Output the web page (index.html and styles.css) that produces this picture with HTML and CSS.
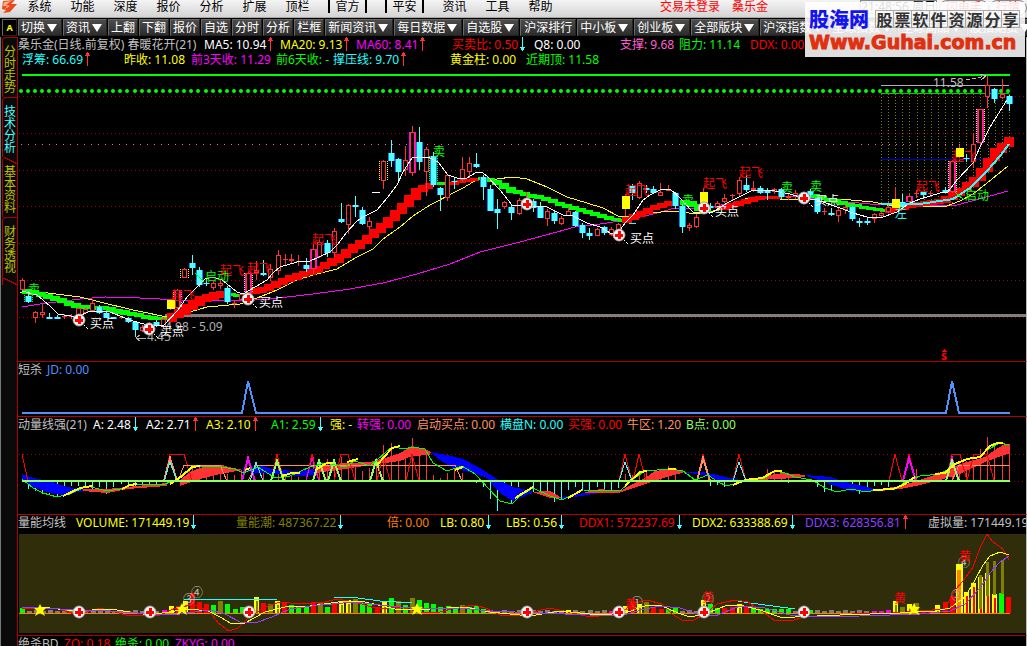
FILE: index.html
```html
<!DOCTYPE html>
<html lang="zh-CN">
<head>
  <meta charset="UTF-8">
  <meta name="viewport" content="width=device-width, initial-scale=1.0">
  <title>桑乐金 - 技术分析</title>
  <link rel="stylesheet" href="styles.css">
</head>
<body>
  <!-- 主菜单 -->
  <header class="menubar">
    <svg class="logo" viewBox="0 0 18 14" aria-hidden="true">
      <path d="M3 1 L15 0 L11 4 L17 4 L10 12 L3 13 L6 10 L2 9 Z" fill="#e8481c"/>
      <path d="M4 2 L11 1 L6 5 L10 6 L5 9 L7 6 L3 6 Z" fill="#ffb088"/>
    </svg>
    <nav class="menu">
      <a href="#">系统</a>
      <a href="#">功能</a>
      <a href="#">深度</a>
      <a href="#">报价</a>
      <a href="#">分析</a>
      <a href="#">扩展</a>
      <a href="#">顶栏</a>
      <a href="#" class="framed"><span>官方</span></a>
      <a href="#" class="framed"><span>平安</span></a>
      <a href="#">资讯</a>
      <a href="#">工具</a>
      <a href="#">帮助</a>
    </nav>
    <div class="account"><span>交易未登录</span><span>桑乐金</span></div>
    <div class="clock">21:48:56 周日</div>
    <button class="round">闪电手</button>
    <button class="round">行情</button>
  </header>

  <!-- 工具栏 -->
  <div class="toolbar">
    <button class="mark">A</button>
    <button class="drop">切换</button>
    <button class="drop">资讯</button>
    <button>上翻</button>
    <button>下翻</button>
    <button>报价</button>
    <button>自选</button>
    <button>分时</button>
    <button>分析</button>
    <button>栏框</button>
    <button class="drop">新闻资讯</button>
    <button class="drop">每日数据</button>
    <button class="drop">自选股</button>
    <button class="wide">沪深排行</button>
    <button class="drop">中小板</button>
    <button class="drop">创业板</button>
    <button class="drop">全部版块</button>
    <button class="drop">沪深指数</button>
    <button class="drop">全球指数</button>
    <button class="drop">全球商品</button>
    <button class="drop">股指期货</button>
  </div>

  <div class="workspace">
    <nav class="side">
      <a href="#">分时走势</a>
      <a href="#" class="active">技术分析</a>
      <a href="#">基本资料</a>
      <a href="#" class="last">财务透视</a>
    </nav>

    <main class="panels">
      <!-- K线 -->
      <section class="panel">
        <div class="info price-a">
          <span class="grey">桑乐金(日线.前复权) 春暖花开(21)</span>
          <span class="white up">MA5: 10.94</span>
          <span class="yellow up">MA20: 9.13</span>
          <span class="magenta up">MA60: 8.41</span>
          <span class="red down">买卖比: 0.50</span>
          <span class="white">Q8: 0.00</span>
          <span class="pink">支撑: 9.68</span>
          <span class="green">阻力: 11.14</span>
          <span class="red">DDX: 0.00</span>
        </div>
        <div class="info price-b">
          <span class="cyan up">浮筹: 66.69</span>
          <span class="yellow">昨收: 11.08</span>
          <span class="magenta">前3天收: 11.29</span>
          <span class="green">前6天收: -</span>
          <span class="cyan up">撑压线: 9.70</span>
          <span class="yellow">黄金柱: 0.00</span>
          <span class="green">近期顶: 11.58</span>
        </div>
        <svg class="chart" id="price" viewBox="18 67 1008 294"></svg>
      </section>

      <section class="panel">
        <div class="info kill">
          <span class="grey">短杀</span>
          <span class="blue">JD: 0.00</span>
        </div>
        <svg class="chart" id="kill" viewBox="18 378 1008 38"></svg>
      </section>

      <!-- 动量 -->
      <section class="panel">
        <div class="info momentum">
          <span class="grey">动量线强(21)</span>
          <span class="white down">A: 2.48</span>
          <span class="white up">A2: 2.71</span>
          <span class="yellow up">A3: 2.10</span>
          <span class="green down">A1: 2.59</span>
          <span class="yellow">强: -</span>
          <span class="magenta">转强: 0.00</span>
          <span class="orange">启动买点: 0.00</span>
          <span class="cyan">横盘N: 0.00</span>
          <span class="red">买强: 0.00</span>
          <span class="orange">牛区: 1.20</span>
          <span class="lime">B点: 0.00</span>
        </div>
        <svg class="chart" id="momentum" viewBox="18 433 1008 81"></svg>
      </section>

      <!-- 成交量 -->
      <section class="panel">
        <div class="info volume">
          <span class="grey">量能均线</span>
          <span class="yellow down">VOLUME: 171449.19</span>
          <span class="olive down">量能潮: 487367.22</span>
          <span class="amber">倍: 0.00</span>
          <span class="yellow down">LB: 0.80</span>
          <span class="yellow down">LB5: 0.56</span>
          <span class="red down">DDX1: 572237.69</span>
          <span class="yellow down">DDX2: 633388.69</span>
          <span class="violet up">DDX3: 628356.81</span>
          <span class="grey">虚拟量: 171449.19</span>
        </div>
        <svg class="chart" id="volume" viewBox="18 531 1008 104"></svg>
      </section>

      <section class="panel">
        <div class="info bottom">
          <span class="grey">绝杀BD</span>
          <span class="red">ZQ: 0.18</span>
          <span class="green">绝杀: 0.00</span>
          <span class="magenta">ZKYG: 0.00</span>
        </div>
      </section>
    </main>
  </div>

  <aside class="watermark">
    <div class="watermark-top">
      <strong>股海网</strong>
      <span class="cells"><i>股</i><i>票</i><i>软</i><i>件</i><i>资</i><i>源</i><i>分</i><i>享</i></span>
    </div>
    <div class="watermark-url">Www.Guhai.com.cn</div>
  </aside>

  <script src="charts.js"></script>
</body>
</html>
```
FILE: styles.css
```css
* {
  box-sizing: border-box;
}
body {
  margin: 0;
  height: 100vh;
  overflow: hidden;
  background: #000;
  color: #c0c0c0;
  font-family: "Noto Sans", "Noto Sans CJK SC", sans-serif;
  font-size: 12px;
  line-height: 14px;
}
a {
  color: inherit;
  text-decoration: none;
}
button {
  font: inherit;
  margin: 0;
  cursor: pointer;
}

/* 菜单 */
.menubar {
  display: flex;
  align-items: flex-start;
  height: 18px;
  background: linear-gradient(#f4f4f4, #d4d4d4);
  border-bottom: 1px solid #a8a8a8;
  color: #000;
  white-space: nowrap;
}
.logo {
  flex: none;
  width: 18px;
  height: 14px;
}
.menu {
  display: flex;
}
.menu a {
  width: 43px;
  text-align: center;
}
.menu .framed {
  width: 57px;
}
.framed span {
  display: inline-block;
  line-height: 13px;
  padding: 0 5px;
  border-left: 2px solid #000;
  border-right: 2px solid #000;
}
.account {
  display: flex;
  gap: 12px;
  margin-left: 98px;
  width: 205px;
  color: #f00;
}
.clock {
  width: 78px;
  height: 14px;
  margin-right: 2px;
  border: 1px solid #888;
  line-height: 12px;
}
.round {
  height: 16px;
  padding: 0 6px;
  border: 1px solid #888;
  border-radius: 8px;
  background: #eee;
  color: #f00;
  line-height: 12px;
}

/* 工具栏 */
.toolbar {
  display: flex;
  gap: 1px;
  height: 19px;
  padding: 1px 2px;
  background: #000;
  overflow: hidden;
}
.toolbar button {
  flex: none;
  padding: 0 2px;
  border: 1px solid #6a6660;
  border-right-color: #222;
  border-bottom-color: #222;
  background: linear-gradient(#4c4c4c, #2c2c2c);
  color: #fff;
  line-height: 14px;
}
.toolbar .mark {
  width: 15px;
  background: #000;
  color: #ff0;
  font-weight: bold;
  font-size: 9px;
}
.toolbar .wide {
  padding: 0 3px;
}
.toolbar .drop::after {
  content: "";
  display: inline-block;
  margin: 0 2px;
  border: 5px solid transparent;
  border-top: 8px solid #fff;
  border-bottom: 0;
}

.workspace {
  display: flex;
}

/* 左侧标签 */
.side {
  flex: none;
  width: 18px;
  padding-left: 1px;
  background: #0a0a0a;
  border-left: 1px solid #777;
  border-right: 1px solid #b00000;
}
.side a {
  display: block;
  height: 60px;
  padding: 8px 1px 0;
  border-top: 1px solid #b00000;
  border-left: 1px solid #b00000;
  border-top-left-radius: 4px;
  color: #c0c000;
  line-height: 12px;
  word-break: break-all;
}
.side .active {
  color: #4ff;
}
.side .active + a {
  border-top: 0;
  padding-top: 9px;
  background: linear-gradient(to top right, transparent 46%, #b00000 46%, #b00000 56%, transparent 56%) 0 0 / 100% 7px no-repeat;
}
.side .last {
  height: 68px;
  background: linear-gradient(to top right, transparent 46%, #b00000 46%, #b00000 56%, transparent 56%) 0 100% / 100% 7px no-repeat;
}

/* 指标窗口 */
.panels {
  flex: 1;
  min-width: 0;
  overflow: hidden;
}
.panel {
  border-bottom: 1px solid #b00000;
  border-right: 1px solid #bbb;
}
.chart {
  display: block;
  width: 100%;
  shape-rendering: crispEdges;
}
.info {
  display: grid;
  height: 16px;
  line-height: 16px;
  white-space: nowrap;
}
.price-a {
  grid-template-columns: 186px 76px 76px 96px 82px 86px 59px 71px 1fr;
}
.price-b {
  grid-template-columns: 102px 67px 85px 57px 117px 76px 1fr;
  height: 14px;
  line-height: 14px;
  padding-left: 4px;
}
.kill {
  grid-template-columns: 29px 1fr;
}
.momentum {
  grid-template-columns: 75px 53px 60px 65px 59px 27px 60px 83px 68px 59px 59px 1fr;
}
.volume {
  grid-template-columns: 58px 160px 151px 53px 66px 73px 113px 113px 123px 1fr;
}
.bottom {
  grid-template-columns: 46px 51px 60px 1fr;
}
.up::after, .down::after {
  content: "";
  display: inline-block;
  width: 5px;
  height: 14px;
  margin: -3px 0 0 2px;
  vertical-align: middle;
}
.up::after {
  background:
    linear-gradient(#f33, #f33) 2px 0 / 1px 14px no-repeat,
    linear-gradient(#f33, #f33) 1px 1px / 3px 2px no-repeat,
    linear-gradient(#f33, #f33) 0 3px / 5px 1px no-repeat;
}
.down::after {
  background:
    linear-gradient(#4ff, #4ff) 2px 0 / 1px 14px no-repeat,
    linear-gradient(#4ff, #4ff) 1px 11px / 3px 2px no-repeat,
    linear-gradient(#4ff, #4ff) 0 10px / 5px 1px no-repeat;
}

.grey { color: #c0c0c0; }
.white { color: #fff; }
.yellow { color: #ff0; }
.magenta { color: #f0f; }
.red { color: #f00; }
.pink { color: #ff60d0; }
.green { color: #0f0; }
.cyan { color: #2ff; }
.blue { color: #5090ff; }
.orange { color: #ff9060; }
.lime { color: #90ff60; }
.olive { color: #808000; }
.amber { color: #ff8000; }
.violet { color: #9040ff; }

/* 右上角水印 */
.watermark {
  position: absolute;
  top: 2px;
  right: 2px;
  width: 220px;
  height: 55px;
  padding: 5px 4px 0;
  background: rgba(255, 255, 255, 0.87);
  white-space: nowrap;
}
.watermark-top {
  display: flex;
  justify-content: space-between;
  align-items: center;
  height: 24px;
}
.watermark strong {
  color: #1414f0;
  font-family: "Noto Sans CJK SC", sans-serif;
  font-size: 20px;
  font-weight: 900;
  line-height: 24px;
}
.cells {
  display: flex;
  margin-right: 1px;
  border-left: 1px solid #aaa;
}
.cells i {
  width: 18px;
  height: 18px;
  border: 1px solid #aaa;
  border-left: 0;
  color: #333;
  font-family: "Noto Sans CJK SC", sans-serif;
  font-size: 16px;
  font-style: normal;
  font-weight: bold;
  line-height: 16px;
  text-align: center;
}
.watermark-url {
  color: #e03010;
  font-family: "DejaVu Sans", sans-serif;
  font-size: 19px;
  font-weight: bold;
  line-height: 22px;
  -webkit-text-stroke: 1px #e03010;
}
```
FILE: charts.js
```js
const NS = 'http://www.w3.org/2000/svg';

function add(svg, name, attrs, text) {
  const el = document.createElementNS(NS, name);
  for (const key in attrs) el.setAttribute(key, attrs[key]);
  if (text) el.textContent = text;
  svg.appendChild(el);
  return el;
}

function line(svg, points, color, width = 1, dash = '') {
  add(svg, 'polyline', { points, fill: 'none', stroke: color, 'stroke-width': width, 'stroke-dasharray': dash });
}

function rect(svg, x, y, width, height, fill, stroke = 'none') {
  add(svg, 'rect', { x, y, width, height, fill, stroke });
}

function label(svg, x, y, text, color, size = 12) {
  add(svg, 'text', { x, y, fill: color, 'font-size': size }, text);
}

function parse(points) {
  return points.split(' ').map(p => p.split(',').map(Number));
}

function valueAt(pts, x) {
  for (let i = 1; i < pts.length; i++) {
    if (x <= pts[i][0]) {
      const [x0, y0] = pts[i - 1];
      const [x1, y1] = pts[i];
      return y0 + (y1 - y0) * (x - x0) / (x1 - x0);
    }
  }
  return pts[pts.length - 1][1];
}

// 阶梯状趋势带
function ribbon(svg, points, color, thick) {
  const pts = parse(points);
  const end = pts[pts.length - 1][0];
  for (let x = pts[0][0]; x < end; x += 7) {
    const a = valueAt(pts, x);
    const b = valueAt(pts, Math.min(x + 7, end));
    const top = Math.round(Math.min(a, b) - thick / 2);
    rect(svg, x, top, Math.min(10, end - x + 3), Math.round(Math.abs(a - b) + thick), color);
  }
}

// 买点图标
function plus(svg, x, y) {
  add(svg, 'circle', { cx: x, cy: y, r: 6, fill: '#fff', stroke: '#999', 'stroke-width': 1, 'shape-rendering': 'auto' });
  add(svg, 'circle', { cx: x, cy: y, r: 5, fill: 'none', stroke: '#ddd', 'stroke-width': 1, 'shape-rendering': 'auto' });
  rect(svg, x - 4, y - 1, 8, 3, '#f00');
  rect(svg, x - 1, y - 4, 3, 8, '#f00');
}

/* ---------- K线 ---------- */
const price = document.getElementById('price');

for (const y of [96, 133, 170, 206, 243, 280, 317]) line(price, `19,${y}.5 1026,${y}.5`, '#a00000', 1, '1 3');
line(price, '21,144.5 1009,144.5', '#ff60c0', 1, '1 6');
rect(price, 165, 314, 861, 3, '#808080');
line(price, '22,75 1010,75', '#0f0', 2);

for (let x = 881; x < 1010; x += 7.1) {
  line(price, `${Math.round(x)}.5,94 ${Math.round(x)}.5,${x < 950 ? 204 : 280 - (x - 881)}`, '#808000', 1, '1 2');
}
line(price, '881,85.5 1009,85.5', '#b8a8c8');
line(price, '881,93.5 1009,93.5', '#0c0');
line(price, '881,159.5 1000,159.5', '#00c');
for (let x = 21; x < 1010; x += 7.1) {
  add(price, 'circle', { cx: Math.round(x), cy: 91, r: 2, fill: '#0f0', 'shape-rendering': 'auto' });
}

line(price, '22,307 40,304 80,299 105,297 140,298 180,300 240,301 270,299 313,294 350,289 383,283 417,274 450,264 480,252 520,242 557,232 575,227 600,224 627,220 653,214 675,208 703,208 733,203 760,197 790,196 837,201 870,204 930,206 957,205 990,196 1008,191', '#f0f');
line(price, '20,292 40,292 80,297 100,302 133,310 167,317 190,312 207,307 240,304 257,298 277,290 297,280 313,275 337,269 357,257 373,249 383,239 400,227 413,216 430,205 463,188 478,179 497,179 512,177 527,179 547,187 567,197 587,203 603,208 618,216 627,217 650,213 673,211 697,214 713,211 727,207 750,197 780,199 840,199 873,202 887,205 907,206 947,206 960,201 973,194 987,183 1008,166', '#ff0');

// 类型: r 阳线, c 阴线, m 强势阳线, y 黄金柱
const candles = [
  [22, 'r', 278, 280, 290, 290], [28, 'c', 291, 296, 302, 303], [35, 'r', 311, 312, 318, 323], [42, 'r', 303, 312, 315, 318],
  [49, 'c', 313, 317, 319, 319], [57, 'c', 315, 317, 319, 319], [64, 'r', 314, 316, 317, 319], [71, 'r', 314, 316, 317, 319],
  [78, 'r', 307, 308, 316, 317], [85, 'r', 308, 309, 313, 314], [92, 'r', 299, 303, 311, 312], [99, 'c', 305, 307, 313, 314],
  [106, 'c', 311, 313, 318, 318], [113, 'c', 317, 317, 319, 319], [121, 'r', 316, 317, 318, 319], [128, 'c', 317, 318, 322, 323],
  [135, 'c', 321, 322, 330, 337], [142, 'r', 325, 327, 331, 332], [149, 'r', 322, 324, 328, 330], [156, 'c', 320, 322, 326, 327],
  [163, 'r', 317, 319, 327, 328], [170, 'y', 299, 300, 309, 310], [177, 'm', 289, 290, 308, 309], [184, 'r', 268, 269, 278, 278],
  [192, 'c', 255, 263, 268, 275], [199, 'c', 267, 270, 285, 287], [206, 'c', 279, 283, 284, 286], [213, 'r', 281, 283, 288, 290],
  [220, 'r', 280, 283, 286, 289], [227, 'c', 286, 288, 302, 304], [234, 'r', 300, 303, 304, 308], [241, 'r', 293, 294, 300, 300],
  [248, 'm', 272, 273, 293, 294], [256, 'r', 261, 270, 273, 280], [263, 'c', 260, 273, 275, 276], [270, 'r', 264, 269, 278, 281],
  [278, 'r', 250, 255, 271, 275], [285, 'r', 254, 259, 260, 265], [291, 'r', 254, 259, 261, 263], [298, 'r', 255, 261, 262, 266],
  [306, 'c', 258, 265, 269, 272], [313, 'm', 244, 249, 269, 274], [319, 'r', 240, 242, 257, 258], [327, 'c', 240, 243, 253, 257],
  [334, 'r', 228, 231, 253, 257], [341, 'c', 203, 219, 222, 223], [348, 'r', 204, 205, 225, 234], [355, 'c', 196, 205, 207, 217],
  [362, 'c', 207, 210, 224, 225], [369, 'r', 217, 221, 227, 229], [383, 'r', 160, 161, 181, 189], [391, 'c', 140, 153, 161, 167],
  [398, 'c', 158, 159, 172, 180], [405, 'r', 146, 160, 170, 176], [412, 'm', 126, 132, 173, 176], [419, 'c', 127, 142, 162, 170],
  [426, 'r', 147, 149, 172, 196], [433, 'c', 152, 156, 185, 187], [440, 'c', 187, 188, 195, 211], [447, 'r', 174, 175, 198, 201],
  [454, 'c', 177, 181, 182, 189], [462, 'r', 157, 169, 180, 182], [469, 'r', 157, 163, 172, 178], [476, 'c', 153, 164, 167, 168],
  [483, 'c', 175, 177, 187, 200], [490, 'c', 185, 189, 211, 211], [497, 'c', 199, 209, 213, 229], [504, 'r', 201, 202, 207, 209],
  [511, 'c', 205, 207, 213, 220], [519, 'r', 198, 200, 214, 215], [526, 'r', 192, 198, 203, 205], [533, 'c', 199, 201, 208, 212],
  [540, 'c', 202, 206, 218, 218], [547, 'r', 209, 211, 219, 226], [554, 'c', 211, 213, 221, 224], [561, 'r', 216, 218, 224, 225],
  [568, 'r', 207, 211, 216, 216], [575, 'c', 211, 212, 226, 227], [582, 'c', 223, 225, 233, 238], [589, 'c', 228, 233, 236, 240],
  [597, 'r', 228, 229, 236, 236], [604, 'c', 226, 227, 233, 235], [611, 'r', 227, 229, 235, 236], [618, 'r', 223, 224, 230, 232],
  [625, 'y', 194, 196, 209, 216], [632, 'c', 184, 186, 193, 200], [639, 'r', 181, 183, 198, 199], [646, 'c', 185, 188, 190, 193],
  [653, 'c', 186, 189, 193, 194], [660, 'r', 183, 192, 196, 196], [668, 'r', 185, 190, 191, 191], [675, 'c', 192, 193, 206, 209],
  [682, 'c', 204, 206, 227, 233], [689, 'r', 223, 225, 228, 231], [696, 'r', 214, 217, 227, 228], [703, 'y', 188, 192, 203, 206],
  [710, 'c', 203, 206, 208, 210], [717, 'r', 201, 203, 208, 209], [724, 'r', 194, 198, 202, 203], [732, 'r', 194, 195, 196, 200],
  [739, 'r', 177, 180, 194, 196], [746, 'c', 175, 185, 190, 192], [753, 'r', 181, 188, 190, 192], [760, 'c', 186, 188, 193, 194],
  [767, 'c', 188, 191, 193, 200], [774, 'r', 188, 189, 192, 194], [781, 'c', 188, 189, 197, 199], [788, 'r', 194, 196, 198, 200],
  [795, 'r', 190, 193, 196, 199], [810, 'c', 189, 191, 195, 198], [817, 'c', 197, 198, 212, 214], [824, 'r', 208, 211, 212, 215],
  [831, 'c', 208, 213, 215, 216], [838, 'r', 208, 210, 216, 222], [845, 'r', 205, 207, 210, 214], [852, 'c', 206, 207, 219, 221],
  [859, 'c', 218, 221, 223, 227], [867, 'c', 217, 221, 223, 225], [874, 'r', 213, 214, 219, 223], [881, 'r', 211, 213, 216, 218],
  [888, 'r', 201, 207, 212, 213], [895, 'y', 187, 199, 208, 208], [902, 'c', 194, 202, 207, 209], [909, 'm', 194, 196, 202, 202],
  [916, 'r', 190, 193, 194, 198], [923, 'c', 191, 192, 195, 199], [930, 'r', 191, 193, 194, 197], [945, 'c', 187, 190, 192, 193],
  [952, 'm', 160, 161, 192, 193], [959, 'y', 146, 148, 157, 158], [966, 'c', 154, 158, 159, 162], [973, 'r', 133, 144, 162, 168],
  [980, 'm', 109, 109, 143, 147], [987, 'r', 76, 85, 97, 108], [994, 'c', 88, 89, 99, 103], [1002, 'r', 79, 94, 98, 99],
  [1009, 'c', 95, 96, 104, 111]
];

const G = '#0f0';
const R = '#f00';
ribbon(price, '22,290 40,294 60,301 78,306 105,308 125,313 150,318 165,319', G, 3);
ribbon(price, '167,319 180,313 190,306 203,298 220,294 226,294', R, 6);
ribbon(price, '226,294 240,295', G, 2);
ribbon(price, '250,292 263,289 280,282 297,275 313,271 330,263 347,252 357,245 373,234 383,225 397,212 407,202 417,190 430,185', R, 4);
ribbon(price, '436,183 446,183', G, 3);
ribbon(price, '449,184 476,179', R, 2);
ribbon(price, '478,178 487,179 500,184 512,191 533,196 560,204 587,212 610,219 622,221', G, 2);
ribbon(price, '622,221 637,215 653,208 670,203 676,202', R, 3);
ribbon(price, '680,202 690,204 700,208 708,210', G, 4);
ribbon(price, '720,208 727,206 745,201 760,197 778,197', R, 3);
ribbon(price, '810,195 830,200 850,205 870,209 885,211', G, 2);
ribbon(price, '885,211 905,207 920,204 940,201 950,197 960,191 975,180 985,167 995,152 1005,144 1011,139', R, 4);

// 虚线边框的K线
for (const [x, top, bottom, color] of [[177, 290, 308, '#ff0'], [184, 269, 278, '#ff0'], [248, 273, 293, '#ff0'], [383, 161, 181, '#ff0'],
  [433, 156, 182, '#0f0'], [28, 295, 303, '#0f0'], [952, 161, 192, '#ff0'], [980, 109, 143, '#ff0']]) {
  line(price, `${x - 3.5},${top} ${x - 3.5},${bottom}`, color, 1, '1 1');
  line(price, `${x + 4.5},${top} ${x + 4.5},${bottom}`, color, 1, '1 1');
}

for (const [x, type, high, top, bottom, low] of candles) {
  const stroke = type === 'c' ? '#5ff' : '#f33';
  line(price, `${x + 0.5},${high} ${x + 0.5},${top}`, stroke);
  line(price, `${x + 0.5},${bottom} ${x + 0.5},${low}`, stroke);
  const h = Math.max(1, bottom - top);
  if (type === 'c') {
    rect(price, x - 3, top, 7, h, '#08f');
    rect(price, x - 2, top, 5, h, '#5ff');
  } else if (type === 'm') {
    rect(price, x - 3, top, 7, h, '#f0f');
    rect(price, x - 2, top, 5, h, '#f33');
    rect(price, x - 1, top + 1, 3, h - 2, '#000');
  } else if (type === 'r') {
    rect(price, x - 2, top, 5, h, '#f33');
    if (h > 2) rect(price, x - 1, top + 1, 3, h - 2, '#000');
  }
}
line(price, '372,192.5 380,192.5', '#fff');

line(price, '22,291 37,295 50,306 58,314 77,317 90,311 110,312 130,320 147,325 163,326 178,310 187,297 197,287 205,279 213,277 222,280 237,292 243,294 255,287 267,280 273,273 280,267 297,262 310,261 330,252 337,245 347,232 357,221 363,217 377,210 387,198 397,185 403,172 412,158 423,157 430,158 438,162 448,175 457,178 467,178 477,172 483,173 487,176 500,190 512,205 527,206 547,207 563,215 573,216 587,223 600,227 612,234 618,233 625,223 633,215 643,200 650,195 660,190 670,189 680,198 693,212 703,213 713,212 727,203 747,193 753,190 770,190 790,194 803,198 817,200 840,208 853,213 867,217 883,217 897,212 910,203 920,199 940,193 948,192 957,180 973,163 980,147 990,127 1007,100', '#fff');
line(price, '881,204 920,204 933,202 953,199 970,188 987,171 1000,156 1009,144', '#2ff', 2);

for (const [x, y] of [[28, 294], [433, 156], [682, 205], [781, 192], [810, 191]]) label(price, x, y, '卖', G);
for (const [x, y] of [[171, 300], [220, 275], [247, 273], [312, 244], [625, 195], [703, 188], [739, 177], [916, 191], [952, 161]]) {
  label(price, x, y, '起飞', R);
}
label(price, 205, 281, '启动', G);
label(price, 965, 200, '启动', G);
line(price, '195,273 204,282', G);
line(price, '955,192 964,200', G);
label(price, 895, 218, '左', '#2ff');
line(price, '629,223.5 636,223.5', '#2ff');

// 黄金柱盖在文字上面
for (const [x, type, , top, bottom] of candles) {
  if (type === 'y') rect(price, x - 3, top, 8, bottom - top, '#ff0');
}

label(price, 165, 331, '4.98 - 5.09', '#b0b0b0');
label(price, 147, 341, '4.45', '#b0b0b0');
line(price, '140,335 136,338 140,341', '#b0b0b0');
line(price, '136,338 146,338', '#b0b0b0');
label(price, 933, 87, '11.58', '#c0c0c0');
line(price, '966,80 986,76', '#c0c0c0', 1, '4 2');
line(price, '980,74 986,76 981,80', '#c0c0c0');

for (const [x, y] of [[79, 320], [149, 329], [248, 299], [527, 204], [619, 235], [704, 208], [804, 198]]) {
  plus(price, x, y);
  if (x !== 527) {
    line(price, `${x + 5},${y + 5} ${x + 9},${y + 9}`, '#fff', 1, '2 1');
    label(price, x + 11, y + (x === 149 || x === 804 ? 7 : 8), '买点', '#fff');
  }
}
add(price, 'path', { d: 'M942 352 L944.5 349 L947 352 Z', fill: R });
add(price, 'text', { x: 941, y: 360, fill: R, 'font-size': 12, 'font-weight': 'bold' }, 's');

/* ---------- 短杀 ---------- */
const kill = document.getElementById('kill');
line(kill, '22,413 242,413 248,381 256,413 946,413 952,381 959,413 1010,413', '#5090ff', 2);

/* ---------- 动量 ---------- */
const momentum = document.getElementById('momentum');
line(momentum, '19,454.5 1026,454.5', '#a00000', 1, '1 3');
line(momentum, '1010,481.5 1026,481.5', '#a00000', 1, '1 3');

// 中轴上下的柱线
const down = [[28, 489], [35, 491], [42, 494], [49, 495], [57, 496], [64, 490], [71, 486], [78, 486], [85, 486], [92, 490], [99, 487],
  [106, 494], [113, 487], [121, 484], [128, 487], [135, 486], [142, 485], [149, 484], [156, 484], [476, 483], [483, 487], [490, 499],
  [497, 511], [504, 484], [511, 504], [518, 487], [533, 492], [540, 492], [547, 497], [554, 502], [561, 499], [568, 490], [575, 487],
  [582, 491], [589, 493], [597, 487], [604, 490], [611, 491], [618, 488], [710, 486], [717, 485], [724, 487], [788, 483], [817, 487],
  [824, 492], [831, 490], [852, 485], [859, 494], [867, 487], [874, 486], [881, 485], [888, 487]];
for (const [x, y] of down) line(momentum, `${x}.5,481 ${x}.5,${y}`, '#4ff');
const up = [[192, 466], [199, 467], [206, 468], [213, 467], [220, 466], [227, 474], [234, 475], [241, 470], [263, 472], [278, 462],
  [285, 475], [291, 475], [298, 477], [313, 457], [319, 467], [327, 459], [334, 459], [341, 457], [348, 464], [355, 465], [362, 471],
  [369, 468], [376, 458], [383, 445], [391, 443], [398, 458], [405, 456], [412, 438], [419, 456], [426, 454], [433, 475], [440, 478],
  [447, 473], [454, 466], [462, 473], [625, 474], [632, 475], [639, 474], [646, 470], [653, 474], [660, 470], [668, 466], [675, 469],
  [767, 469], [774, 471], [781, 473], [788, 473], [916, 469], [938, 472], [952, 458], [959, 462], [966, 461], [973, 461], [980, 449],
  [987, 437], [994, 447], [1002, 449], [1009, 444]];
for (const [x, y] of up) line(momentum, `${x}.5,481 ${x}.5,${y}`, '#f33');

const areas = [
  ['#00f', '22,474 33,478 50,481 67,487 83,489 83,491 63,495 50,493 33,487 22,479'],
  ['#f33', '83,489 107,489 127,487 127,489 107,493 83,491'],
  ['#f33', '127,487 167,483 167,486 127,489'],
  ['#f33', '180,480 190,472 203,467 222,465 233,468 243,470 220,474 200,479 180,486'],
  ['#00f', '243,469 262,466 275,470 300,471 315,469 315,475 300,476 275,474 243,472'],
  ['#f33', '315,470 325,465 345,463 370,462 385,458 400,453 412,446 425,449 431,452 430,455 412,456 400,461 370,465 345,469 315,473'],
  ['#00f', '430,452 447,455 463,459 480,468 497,479 513,487 532,491 532,493 513,501 500,493 487,478 473,473 453,468 440,460'],
  ['#f33', '533,492 550,491 562,498 550,498'],
  ['#00f', '562,497 600,490 600,493 562,499'],
  ['#f33', '585,492 600,489 620,491 633,484 645,478 655,471 670,469 685,472 660,479 640,486 618,493 585,493'],
  ['#00f', '683,472 703,472 717,475 740,480 752,481 740,483 717,480 703,475'],
  ['#f33', '757,480 770,475 783,473 805,475 805,477 780,479'],
  ['#00f', '805,475 830,477 850,483 880,490 873,491 850,491 830,484 812,478'],
  ['#f33', '880,489 900,486 920,480 940,473 960,464 985,457 995,450 1005,444 1010,444 1010,453 985,462 960,474 940,480 920,485 900,489 880,491']
];
for (const [fill, points] of areas) add(momentum, 'polygon', { points, fill });

line(momentum, '22,454 28,481', R);
line(momentum, '164,481 170,454 184,454 192,481', R);
line(momentum, '178,481 184,465 220,465 227,481', '#ff9060');
line(momentum, '248,481 256,465 455,465 462,481', '#ff9060');
line(momentum, '952,481 959,465 1009,465', '#ff9060');
line(momentum, '334,481 341,454 348,454 355,481', R);
line(momentum, '946,481 952,454 960,454 967,481 974,454 987,454 994,481', R);
for (const [x, top, color, width] of [[170, 458, '#ff9060', 2], [170, 462, '#4ff', 1], [248, 458, '#f0f', 2], [256, 462, '#4ff', 1],
  [277, 454, R, 1], [277, 461, '#90ff60', 2], [312, 454, R, 1], [312, 458, '#f0f', 1], [319, 461, '#90ff60', 2], [334, 461, '#90ff60', 2],
  [376, 461, '#90ff60', 2], [383, 454, R, 1], [412, 454, R, 1], [625, 454, R, 1], [625, 462, '#4ff', 1], [639, 454, R, 1],
  [703, 454, R, 1], [703, 458, '#ff9060', 2], [739, 454, R, 1], [739, 462, '#4ff', 1], [895, 454, R, 1], [909, 454, R, 1],
  [909, 458, '#f0f', 2], [952, 458, '#f0f', 2], [952, 461, '#90ff60', 2]]) {
  line(momentum, `${x - 6},481 ${x},${top} ${x + 7},481`, color, width);
}

line(momentum, '22,479 33,488 43,493 57,497 70,494 87,486 107,491 120,489 135,484 165,484 180,478 195,466 215,466 235,469 243,473 258,467 275,478 290,476 310,467 325,463 345,467 355,461 370,466 385,453 392,447 405,449 412,447 425,449 433,463 447,471 462,466 475,474 490,490 500,501 512,504 520,496 533,488 550,496 562,500 583,490 620,491 633,479 645,471 670,469 683,471 695,480 708,475 718,482 727,486 737,483 745,480 765,478 775,471 785,473 795,477 812,480 825,488 837,492 850,489 867,492 880,489 895,489 905,482 920,476 940,474 950,468 960,462 967,459 980,457 987,450 1000,443 1009,445', G);
for (const points of ['63,496 80,488 92,486', '122,489 130,485 137,484', '170,484 182,476 192,467 200,466', '245,470 250,468',
  '282,476 292,473 300,473', '315,470 327,463 333,463', '347,462 358,459', '377,465 392,448 400,446', '455,470 463,467',
  '515,498 533,487', '568,498 582,490', '625,486 640,472 647,471', '668,469 676,469', '733,485 745,480 762,478 775,471 782,471',
  '873,490 893,489 903,485 915,477', '935,474 945,473 955,464 967,459 980,457 990,446 997,443 1003,443']) {
  line(momentum, points, '#ff0', 2);
}
line(momentum, '22,481 1010,481', '#90ff60', 2);

/* ---------- 成交量 ---------- */
const volume = document.getElementById('volume');
rect(volume, 19, 534, 1007, 99, '#302e0a');

const special = {
  22: ['g', 608], 163: ['m', 610], 170: ['y', 606], 177: ['r', 606], 184: ['y', 601], 192: ['r', 593], 199: ['r', 602], 206: ['r', 604],
  213: ['g', 605], 220: ['o', 601], 227: ['g', 604], 234: ['g', 609], 241: ['g', 607], 248: ['g', 608], 256: ['y', 597], 263: ['r', 603],
  270: ['o', 604], 277: ['y', 601], 284: ['r', 603], 291: ['g', 605], 298: ['g', 606], 305: ['g', 606], 312: ['r', 602], 319: ['o', 603],
  326: ['g', 607], 334: ['r', 602], 341: ['y', 601], 348: ['y', 600], 355: ['o', 599], 362: ['g', 603], 369: ['g', 603], 376: ['r', 607],
  383: ['y', 601], 390: ['g', 598], 397: ['o', 601], 404: ['g', 605], 411: ['o', 598], 418: ['g', 600], 425: ['g', 603], 433: ['g', 604],
  440: ['g', 607], 447: ['g', 606], 454: ['g', 608], 461: ['o', 605], 468: ['g', 607], 475: ['g', 606], 482: ['g', 609],
  568: ['y', 610], 610: ['m', 611], 625: ['y', 606], 632: ['r', 602], 639: ['y', 604], 646: ['o', 602], 653: ['r', 607], 660: ['r', 609],
  667: ['g', 609], 674: ['g', 608], 703: ['y', 600], 710: ['g', 604], 717: ['g', 608], 724: ['r', 608], 731: ['r', 607], 738: ['y', 604],
  745: ['r', 606], 752: ['g', 607], 760: ['g', 609], 767: ['g', 609], 774: ['g', 609], 781: ['g', 609], 788: ['g', 609], 809: ['g', 610],
  873: ['m', 611], 880: ['m', 611], 887: ['m', 610], 894: ['y', 601], 902: ['o', 607], 909: ['y', 604], 916: ['o', 603], 923: ['r', 610],
  930: ['r', 610], 937: ['y', 605], 944: ['r', 602], 951: ['r', 596], 959: ['y', 564], 966: ['y', 592], 973: ['y', 583], 980: ['y', 577],
  987: ['y', 573], 994: ['y', 594], 1001: ['g', 593], 1008: ['r', 597]
};
const fills = { g: '#0f0', m: '#f0f', y: '#ff0', r: '#f00', o: '#808000' };
for (let i = 0; i < 140; i++) {
  const x = Math.floor(22 + i * 7.1);
  if (x > 1009) break;
  // 浮点取整后允许差一个像素
  const bar = special[x] || special[x + 1] || special[x - 1];
  const top = bar ? bar[1] : 610 + i % 2;
  rect(volume, x - 2, top, 5, 613 - top, bar ? fills[bar[0]] : '#808080');
  if (bar && bar[0] === 'y' && top < 606) rect(volume, x, top + 4, 2, 609 - top, x < 957 ? '#808000' : '#f00');
}
rect(volume, 956, 564, 7, 49, '#ff0');
rect(volume, 957, 570, 4, 43, '#ff8000');
for (const [x, y] of [[980, 575], [987, 562], [994, 561], [1002, 560]]) rect(volume, x - 1, y, 3, 34, '#808000');
line(volume, '19,613.5 1010,613.5', '#ff8000');

line(volume, '184,599.5 277,599.5', '#2ff');
line(volume, '334,597 358,598 380,601 412,603', '#2ff');
line(volume, '732,600 750,603 795,609', '#2ff');
line(volume, '22,608 55,608 78,615 100,608 115,612 130,616 160,615 178,607 195,605 210,612 218,623 229,631 238,628 248,618 265,607 280,602 300,604 325,602 337,599 355,602 378,609 400,607 420,612 440,612 455,608 475,605 488,609 500,615 520,615 550,608 590,617 618,614 635,603 647,600 662,604 672,614 682,620 692,621 705,614 717,604 735,600 748,602 760,610 774,620 790,621 805,617 835,616 860,613 880,614 920,611 945,609 955,590 963,581 973,567 980,548 987,534 993,542 1003,549 1009,560', R);
line(volume, '22,607 50,608 75,611 110,609 150,615 175,611 190,609 208,611 220,617 232,624 245,623 265,612 285,607 310,606 345,601 365,602 395,609 430,609 465,607 490,612 530,616 560,611 600,615 625,613 645,606 660,605 678,613 690,617 705,614 725,606 740,605 760,610 780,617 795,617 840,615 900,613 935,611 950,608 965,597 975,580 983,565 990,556 1000,552 1009,555', '#ff0');
line(volume, '22,607 60,609 110,611 150,614 180,614 210,610 225,614 240,622 255,623 272,617 290,609 320,605 355,602 380,605 420,609 460,608 490,611 540,613 590,615 620,616 645,609 660,606 680,608 700,615 715,616 740,606 765,608 790,615 810,617 860,616 920,614 950,611 965,604 980,588 990,573 1000,562 1009,556', '#9040ff');

for (const [x, y] of [[40, 610], [182, 609], [417, 609], [914, 609]]) {
  const star = `M${x} ${y - 6} L${x + 2} ${y - 2} L${x + 6} ${y - 2} L${x + 3} ${y + 1} L${x + 5} ${y + 6} L${x} ${y + 3} L${x - 5} ${y + 6} L${x - 3} ${y + 1} L${x - 6} ${y - 2} L${x - 2} ${y - 2} Z`;
  add(volume, 'path', { d: star, fill: '#ff0', 'shape-rendering': 'auto' });
}
for (const [x, y, text] of [[183, 604, '③'], [191, 597, '④'], [631, 607, '①'], [702, 604, '②'], [958, 567, '④'], [951, 600, '②']]) {
  label(volume, x, y, text, '#c0c0c0');
}
for (const [x, y] of [[625, 609], [702, 602], [894, 603], [959, 561]]) label(volume, x, y, '黄', R);
for (const [x, y] of [[79, 612], [150, 612], [249, 612], [527, 612], [619, 612], [704, 612], [804, 612]]) plus(volume, x, y);
```
